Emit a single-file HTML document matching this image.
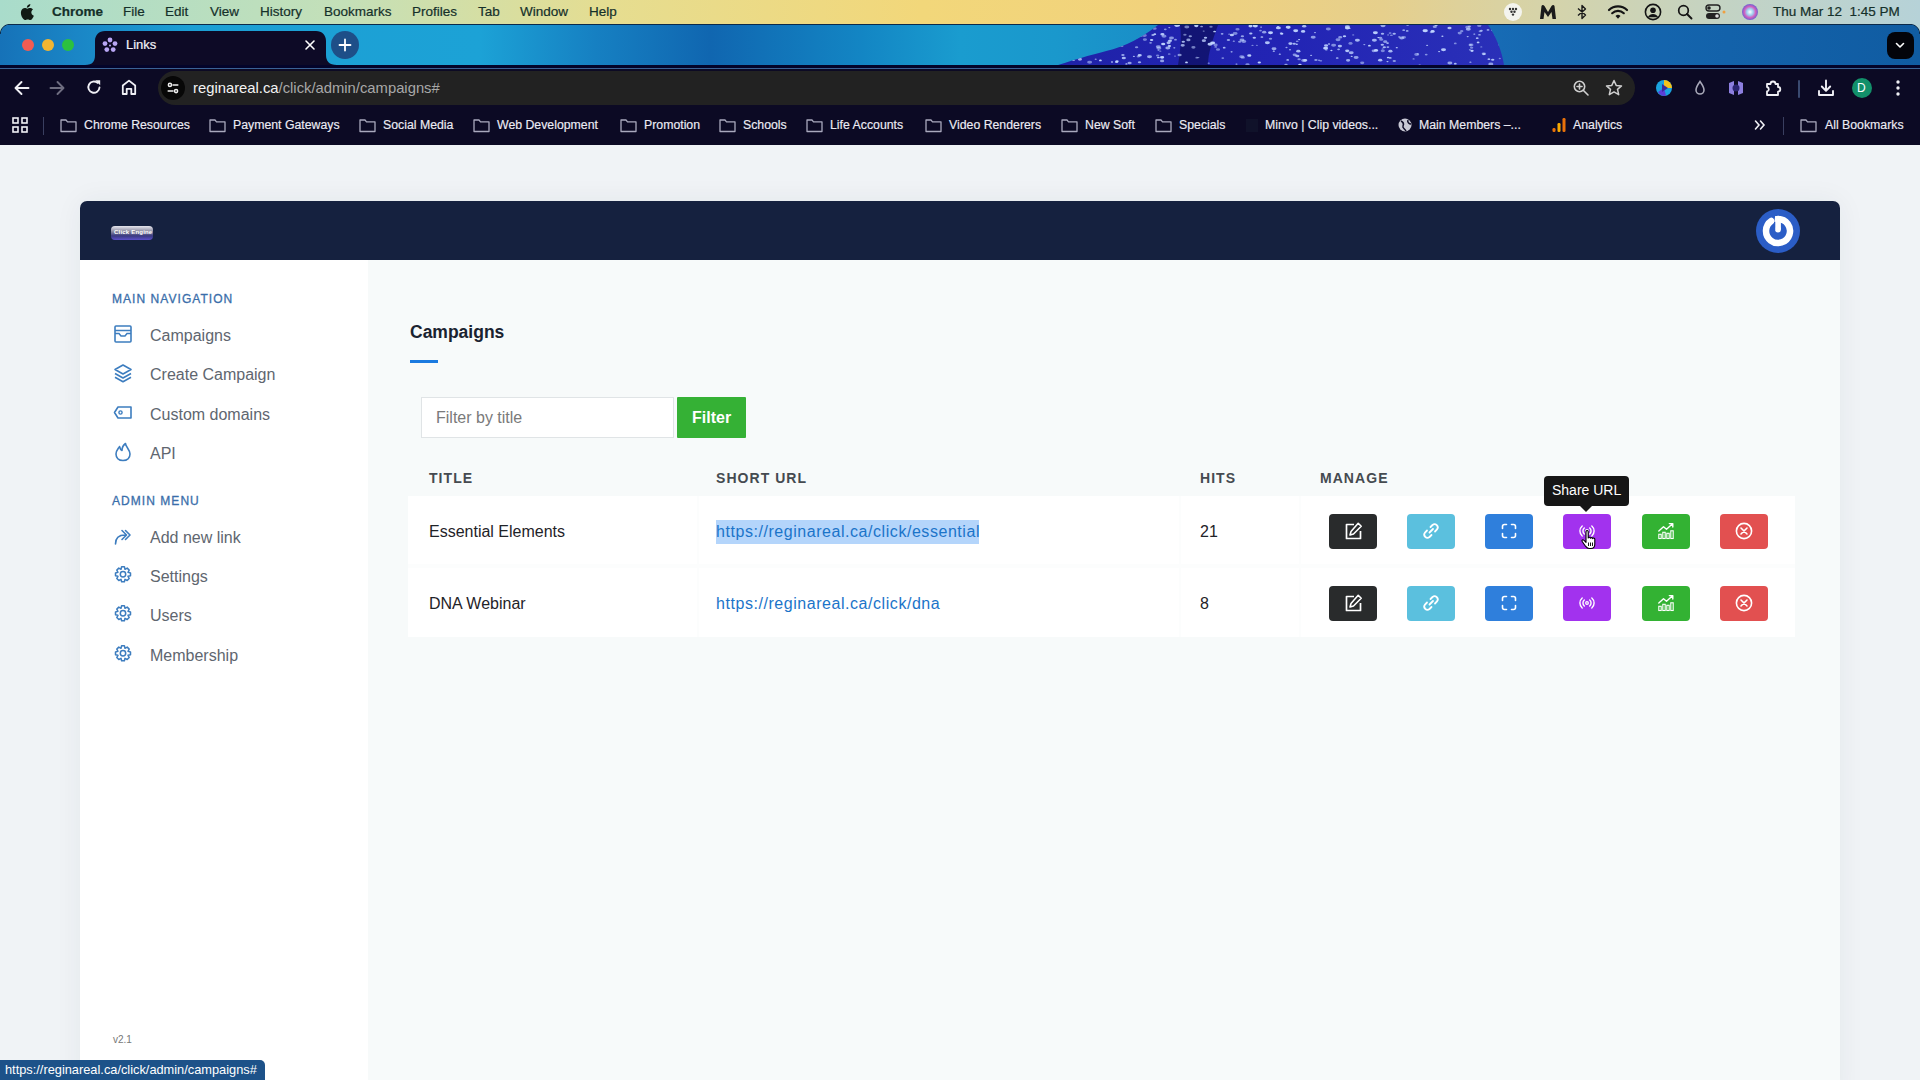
<!DOCTYPE html>
<html><head><meta charset="utf-8">
<style>
*{margin:0;padding:0;box-sizing:border-box}
html,body{width:1920px;height:1080px;overflow:hidden;font-family:"Liberation Sans",sans-serif;background:#f0f3f6;position:relative}
.a{position:absolute}
.t{position:absolute;white-space:nowrap;line-height:1}
/* menu bar */
#menubar{left:0;top:0;width:1920px;height:24px;background:linear-gradient(90deg,#a9dccb 0%,#c4e0b8 18%,#e6dd90 32%,#f2d77a 48%,#f1d27c 60%,#e6cf8c 72%,#d6d3a8 80%,#c3d3c4 90%,#b6d2d8 100%)}
#menubar .t{font-size:13.5px;color:#15302a;top:5px;-webkit-text-stroke:0.2px #15302a}
/* tab strip */
#tabs{left:0;top:24px;width:1920px;height:41px;background:linear-gradient(90deg,#1672b8 0%,#1a86c6 4%,#1c9fd4 10%,#1ca2d6 25%,#1680c2 31%,#1066b0 37%,#1386c4 45%,#1a9ccf 50%,#1a98cc 55%,#1870b8 75%,#1668b2 80%,#105ca2 100%)}
#toolbar{left:0;top:69px;width:1920px;height:76px;background:#0c0a24}
#page{left:0;top:145px;width:1920px;height:935px;background:#f0f3f6}
</style></head>
<body>
<div id="menubar" class="a">
  
  <svg class="a" style="left:19px;top:3px" width="15" height="18" viewBox="0 0 15 18"><path d="M12.3,9.6 C12.3,7.6 13.9,6.7 14,6.6 C13.1,5.3 11.7,5.1 11.2,5.1 C10,5 8.9,5.8 8.3,5.8 C7.7,5.8 6.8,5.1 5.8,5.1 C4.5,5.1 3.3,5.9 2.6,7.1 C1.2,9.5 2.2,13.1 3.6,15.1 C4.3,16.1 5.1,17.2 6.1,17.1 C7.1,17.1 7.5,16.5 8.7,16.5 C9.9,16.5 10.2,17.1 11.3,17.1 C12.4,17.1 13.1,16.1 13.7,15.1 C14.5,14 14.8,12.9 14.8,12.8 C14.8,12.8 12.3,11.9 12.3,9.6 Z M10.4,3.6 C11,2.9 11.4,1.9 11.3,0.9 C10.4,1 9.4,1.5 8.8,2.2 C8.2,2.9 7.8,3.8 7.9,4.8 C8.9,4.9 9.8,4.3 10.4,3.6 Z" fill="#121a14"/></svg>
  <div class="a" style="left:1504px;top:3px;width:18px;height:18px;border-radius:50%;background:#f4f4ee"></div>
  <svg class="a" style="left:1507px;top:6px" width="12" height="12" viewBox="0 0 12 12"><g fill="#333"><circle cx="3" cy="3" r="1.2"/><circle cx="6" cy="3" r="1.2"/><circle cx="9" cy="3" r="1.2"/><circle cx="4.5" cy="5.8" r="1.2"/><circle cx="7.5" cy="5.8" r="1.2"/><circle cx="6" cy="8.6" r="1.2"/></g></svg>
  <svg class="a" style="left:1539px;top:4px" width="18" height="16" viewBox="0 0 18 16"><path d="M1,15 L2.5,2 C3,0.5 4.5,0.5 5.5,2 L9,8 L12.5,2 C13.5,0.5 15,0.5 15.5,2 L17,15 L13.5,15 L12.5,8 L9,13 L5.5,8 L4.5,15 Z" fill="#1a1a1a"/></svg>
  <svg class="a" style="left:1576px;top:4px" width="12" height="16" viewBox="0 0 12 16"><path d="M2,4.5 L9.5,11 L6,14.5 V1.5 L9.5,5 L2,11.5" stroke="#1a1a1a" stroke-width="1.4" fill="none" stroke-linejoin="round"/></svg>
  <svg class="a" style="left:1607px;top:4px" width="22" height="16" viewBox="0 0 22 16"><g fill="none" stroke="#141414" stroke-width="2.2" stroke-linecap="round"><path d="M2,6 A13,13 0 0 1 20,6"/><path d="M5.2,9.2 A8.5,8.5 0 0 1 16.8,9.2"/></g><path d="M8.5,12 A3.7,3.7 0 0 1 13.5,12 L11,14.8 Z" fill="#141414"/></svg>
  <svg class="a" style="left:1644px;top:3px" width="18" height="18" viewBox="0 0 18 18"><circle cx="9" cy="9" r="7.6" stroke="#141414" stroke-width="1.6" fill="none"/><circle cx="9" cy="7.2" r="2.8" fill="#141414"/><path d="M3.8,14.2 C5,11.8 7,11 9,11 C11,11 13,11.8 14.2,14.2" fill="#141414"/></svg>
  <svg class="a" style="left:1677px;top:4px" width="16" height="16" viewBox="0 0 16 16"><circle cx="6.5" cy="6.5" r="4.8" stroke="#141414" stroke-width="1.7" fill="none"/><path d="M10,10 L14.5,14.5" stroke="#141414" stroke-width="1.9" stroke-linecap="round"/></svg>
  <svg class="a" style="left:1705px;top:4px" width="22" height="16" viewBox="0 0 22 16"><rect x="1" y="1" width="14" height="6" rx="3" fill="none" stroke="#222" stroke-width="1.4"/><circle cx="4" cy="4" r="1.8" fill="#222"/><rect x="1" y="9" width="14" height="6" rx="3" fill="#222"/><circle cx="12" cy="12" r="1.8" fill="#ddd"/><circle cx="19" cy="8" r="1.5" fill="#f0a040"/></svg>
  <svg class="a" style="left:1741px;top:3px" width="18" height="18" viewBox="0 0 18 18"><defs><radialGradient id="siri" cx="50%" cy="50%" r="50%"><stop offset="0%" stop-color="#fff"/><stop offset="40%" stop-color="#9fd0f0"/><stop offset="70%" stop-color="#d060c0"/><stop offset="100%" stop-color="#7060d0"/></radialGradient></defs><circle cx="9" cy="9" r="8" fill="url(#siri)"/></svg>
  <span class="t" style="left:52px;font-weight:bold">Chrome</span>
  <span class="t" style="left:123px">File</span>
  <span class="t" style="left:165px">Edit</span>
  <span class="t" style="left:210px">View</span>
  <span class="t" style="left:260px">History</span>
  <span class="t" style="left:324px">Bookmarks</span>
  <span class="t" style="left:412px">Profiles</span>
  <span class="t" style="left:478px">Tab</span>
  <span class="t" style="left:520px">Window</span>
  <span class="t" style="left:589px">Help</span>
  <span class="t" style="left:1773px">Thu Mar 12&nbsp;&nbsp;1:45 PM</span>
</div>
<div id="tabs" class="a">
  <div class="a" style="left:0;top:0;width:1920px;height:1px;background:#0b2a4a"></div>
  <div class="a" style="left:22px;top:15px;width:12px;height:12px;border-radius:50%;background:#f45c52"></div>
  <div class="a" style="left:42px;top:15px;width:12px;height:12px;border-radius:50%;background:#f2b533"></div>
  <div class="a" style="left:62px;top:15px;width:12px;height:12px;border-radius:50%;background:#2cc13f"></div>
  <!-- sparkle image region -->
  <svg class="a" style="left:1058px;top:1px" width="450" height="40" viewBox="0 0 450 43" preserveAspectRatio="none">
    <defs><clipPath id="spk"><path d="M0,43 C20,36 40,30 55,26 C75,20 90,8 100,0 L430,0 C438,12 444,28 446,43 Z"/></clipPath>
    <linearGradient id="spkg" x1="0" y1="0" x2="1" y2="0"><stop offset="0" stop-color="#1f22a8"/><stop offset="0.5" stop-color="#2224b4"/><stop offset="1" stop-color="#2a30b8"/></linearGradient></defs>
    <g clip-path="url(#spk)">
    <rect x="0" y="0" width="450" height="43" fill="url(#spkg)"/>
    <path d="M122,0 L160,0 C155,15 150,30 150,43 L120,43 C122,30 124,15 122,0 Z" fill="#0e1060" opacity="0.75"/>
    <g fill="#c0d4ff"><ellipse cx="145.7" cy="6.5" rx="1.1" ry="0.7" opacity="0.54"/><ellipse cx="241.1" cy="15.7" rx="1.1" ry="0.7" opacity="0.95"/><ellipse cx="96.6" cy="3.7" rx="2.1" ry="1.4" opacity="0.53"/><ellipse cx="40.8" cy="18.3" rx="2.5" ry="1.6" opacity="0.56"/><ellipse cx="100.5" cy="27.0" rx="1.1" ry="0.7" opacity="0.79"/><ellipse cx="178.5" cy="42.0" rx="1.1" ry="0.7" opacity="0.78"/><ellipse cx="59.9" cy="18.0" rx="2.5" ry="1.6" opacity="0.56"/><ellipse cx="138.8" cy="35.1" rx="1.4" ry="0.9" opacity="0.55"/><ellipse cx="257.0" cy="8.1" rx="1.1" ry="0.7" opacity="0.77"/><ellipse cx="28.3" cy="2.6" rx="1.4" ry="0.9" opacity="0.75"/><ellipse cx="239.3" cy="33.4" rx="2.1" ry="1.4" opacity="0.79"/><ellipse cx="203.9" cy="12.9" rx="1.4" ry="0.9" opacity="0.85"/><ellipse cx="109.8" cy="24.7" rx="2.5" ry="1.6" opacity="0.75"/><ellipse cx="154.6" cy="19.3" rx="2.5" ry="1.6" opacity="0.99"/><ellipse cx="53.1" cy="18.0" rx="1.7" ry="1.1" opacity="0.58"/><ellipse cx="220.0" cy="1.7" rx="1.1" ry="0.7" opacity="0.88"/><ellipse cx="257.9" cy="37.6" rx="1.7" ry="1.1" opacity="0.67"/><ellipse cx="157.6" cy="21.4" rx="2.1" ry="1.4" opacity="0.53"/><ellipse cx="42.1" cy="11.6" rx="1.1" ry="0.7" opacity="0.53"/><ellipse cx="315.7" cy="27.8" rx="2.1" ry="1.4" opacity="0.64"/><ellipse cx="173.6" cy="28.8" rx="1.1" ry="0.7" opacity="0.97"/><ellipse cx="160.0" cy="26.3" rx="2.1" ry="1.4" opacity="0.53"/><ellipse cx="345.7" cy="5.6" rx="1.4" ry="0.9" opacity="0.70"/><ellipse cx="412.6" cy="21.3" rx="1.4" ry="0.9" opacity="0.72"/><ellipse cx="247.2" cy="38.0" rx="2.1" ry="1.4" opacity="0.93"/><ellipse cx="125.3" cy="17.9" rx="1.7" ry="1.1" opacity="0.84"/><ellipse cx="171.2" cy="9.9" rx="1.1" ry="0.7" opacity="0.59"/><ellipse cx="104.4" cy="10.0" rx="2.1" ry="1.4" opacity="0.92"/><ellipse cx="82.1" cy="12.1" rx="1.4" ry="0.9" opacity="0.71"/><ellipse cx="166.2" cy="24.4" rx="1.4" ry="0.9" opacity="0.85"/><ellipse cx="232.0" cy="26.6" rx="1.1" ry="0.7" opacity="0.73"/><ellipse cx="391.9" cy="40.9" rx="2.5" ry="1.6" opacity="0.70"/><ellipse cx="179.5" cy="4.5" rx="2.1" ry="1.4" opacity="0.53"/><ellipse cx="30.3" cy="9.0" rx="1.4" ry="0.9" opacity="0.55"/><ellipse cx="270.3" cy="4.4" rx="2.5" ry="1.6" opacity="0.58"/><ellipse cx="45.7" cy="15.6" rx="1.1" ry="0.7" opacity="0.54"/><ellipse cx="93.6" cy="16.2" rx="1.7" ry="1.1" opacity="0.98"/><ellipse cx="271.0" cy="20.4" rx="1.1" ry="0.7" opacity="0.92"/><ellipse cx="446.9" cy="20.0" rx="2.1" ry="1.4" opacity="0.66"/><ellipse cx="64.9" cy="32.2" rx="1.7" ry="1.1" opacity="0.74"/><ellipse cx="311.4" cy="22.2" rx="1.4" ry="0.9" opacity="0.98"/><ellipse cx="237.7" cy="6.3" rx="2.5" ry="1.6" opacity="0.96"/><ellipse cx="341.2" cy="12.8" rx="1.1" ry="0.7" opacity="0.85"/><ellipse cx="117.5" cy="15.8" rx="1.4" ry="0.9" opacity="0.68"/><ellipse cx="100.3" cy="23.3" rx="2.5" ry="1.6" opacity="0.66"/><ellipse cx="100.4" cy="34.9" rx="1.4" ry="0.9" opacity="0.90"/><ellipse cx="368.2" cy="31.8" rx="1.4" ry="0.9" opacity="0.60"/><ellipse cx="221.8" cy="31.4" rx="1.1" ry="0.7" opacity="0.90"/><ellipse cx="212.5" cy="8.3" rx="2.5" ry="1.6" opacity="0.98"/><ellipse cx="201.3" cy="40.3" rx="1.7" ry="1.1" opacity="0.98"/><ellipse cx="164.1" cy="9.5" rx="1.4" ry="0.9" opacity="0.74"/><ellipse cx="152.0" cy="20.8" rx="2.5" ry="1.6" opacity="0.92"/><ellipse cx="215.8" cy="28.1" rx="1.1" ry="0.7" opacity="0.92"/><ellipse cx="54.0" cy="16.7" rx="1.4" ry="0.9" opacity="0.74"/><ellipse cx="80.3" cy="33.9" rx="1.7" ry="1.1" opacity="0.54"/><ellipse cx="425.8" cy="31.0" rx="2.1" ry="1.4" opacity="0.70"/><ellipse cx="426.1" cy="31.2" rx="1.4" ry="0.9" opacity="1.00"/><ellipse cx="12.4" cy="25.4" rx="2.1" ry="1.4" opacity="0.90"/><ellipse cx="65.8" cy="35.5" rx="2.1" ry="1.4" opacity="0.83"/><ellipse cx="157.7" cy="23.6" rx="1.4" ry="0.9" opacity="0.51"/><ellipse cx="359.7" cy="31.2" rx="1.1" ry="0.7" opacity="0.76"/><ellipse cx="420.1" cy="18.7" rx="1.4" ry="0.9" opacity="0.91"/><ellipse cx="95.0" cy="10.8" rx="1.7" ry="1.1" opacity="0.75"/><ellipse cx="343.7" cy="14.0" rx="2.5" ry="1.6" opacity="0.71"/><ellipse cx="59.0" cy="39.1" rx="1.7" ry="1.1" opacity="0.95"/><ellipse cx="298.1" cy="35.0" rx="2.5" ry="1.6" opacity="0.71"/><ellipse cx="413.0" cy="21.6" rx="2.5" ry="1.6" opacity="0.58"/><ellipse cx="229.7" cy="37.5" rx="1.4" ry="0.9" opacity="0.80"/><ellipse cx="349.2" cy="6.4" rx="1.4" ry="0.9" opacity="0.74"/><ellipse cx="326.3" cy="23.9" rx="1.7" ry="1.1" opacity="0.84"/><ellipse cx="238.8" cy="20.7" rx="1.1" ry="0.7" opacity="0.94"/><ellipse cx="25.6" cy="8.2" rx="1.1" ry="0.7" opacity="0.89"/><ellipse cx="228.5" cy="24.2" rx="1.1" ry="0.7" opacity="0.72"/><ellipse cx="275.6" cy="21.7" rx="2.5" ry="1.6" opacity="0.60"/><ellipse cx="124.7" cy="21.9" rx="2.1" ry="1.4" opacity="0.75"/><ellipse cx="111.4" cy="22.5" rx="1.7" ry="1.1" opacity="0.96"/><ellipse cx="401.7" cy="8.7" rx="2.1" ry="1.4" opacity="0.57"/><ellipse cx="54.7" cy="19.0" rx="1.1" ry="0.7" opacity="0.84"/><ellipse cx="192.8" cy="9.1" rx="1.7" ry="1.1" opacity="0.89"/><ellipse cx="403.7" cy="6.6" rx="1.7" ry="1.1" opacity="0.57"/><ellipse cx="397.3" cy="41.6" rx="1.4" ry="0.9" opacity="0.87"/><ellipse cx="42.4" cy="38.1" rx="1.4" ry="0.9" opacity="0.99"/><ellipse cx="374.6" cy="6.9" rx="2.1" ry="1.4" opacity="1.00"/><ellipse cx="181.7" cy="18.1" rx="1.7" ry="1.1" opacity="0.66"/><ellipse cx="325.0" cy="0.8" rx="2.5" ry="1.6" opacity="0.73"/><ellipse cx="316.4" cy="16.5" rx="2.5" ry="1.6" opacity="0.81"/><ellipse cx="230.5" cy="2.8" rx="1.4" ry="0.9" opacity="0.99"/><ellipse cx="47.2" cy="11.4" rx="1.1" ry="0.7" opacity="0.95"/><ellipse cx="81.7" cy="32.5" rx="2.1" ry="1.4" opacity="0.92"/><ellipse cx="304.2" cy="40.7" rx="2.1" ry="1.4" opacity="0.57"/><ellipse cx="413.6" cy="24.5" rx="1.7" ry="1.1" opacity="0.54"/><ellipse cx="25.9" cy="29.6" rx="2.1" ry="1.4" opacity="0.95"/><ellipse cx="121.0" cy="0.7" rx="1.1" ry="0.7" opacity="0.90"/><ellipse cx="37.7" cy="36.8" rx="1.1" ry="0.7" opacity="0.63"/><ellipse cx="54.8" cy="0.5" rx="2.5" ry="1.6" opacity="0.71"/><ellipse cx="411.9" cy="26.7" rx="1.1" ry="0.7" opacity="0.76"/><ellipse cx="107.3" cy="4.7" rx="1.4" ry="0.9" opacity="0.63"/><ellipse cx="81.5" cy="40.1" rx="1.7" ry="1.1" opacity="0.77"/><ellipse cx="92.6" cy="19.2" rx="1.4" ry="0.9" opacity="0.64"/><ellipse cx="361.7" cy="42.8" rx="1.1" ry="0.7" opacity="0.51"/><ellipse cx="329.9" cy="23.7" rx="1.4" ry="0.9" opacity="0.76"/><ellipse cx="110.6" cy="19.2" rx="2.1" ry="1.4" opacity="0.83"/><ellipse cx="245.7" cy="38.2" rx="2.5" ry="1.6" opacity="0.65"/><ellipse cx="96.8" cy="9.9" rx="1.4" ry="0.9" opacity="0.92"/><ellipse cx="318.0" cy="27.3" rx="2.1" ry="1.4" opacity="0.99"/><ellipse cx="441.8" cy="36.0" rx="1.1" ry="0.7" opacity="0.54"/><ellipse cx="333.4" cy="11.0" rx="1.4" ry="0.9" opacity="0.53"/><ellipse cx="299.4" cy="16.4" rx="2.5" ry="1.6" opacity="0.84"/><ellipse cx="126.9" cy="10.4" rx="1.7" ry="1.1" opacity="0.52"/><ellipse cx="83.4" cy="11.6" rx="1.1" ry="0.7" opacity="0.63"/><ellipse cx="432.8" cy="41.8" rx="2.5" ry="1.6" opacity="0.66"/><ellipse cx="15.5" cy="37.9" rx="1.4" ry="0.9" opacity="0.68"/><ellipse cx="0.5" cy="16.4" rx="2.1" ry="1.4" opacity="0.64"/><ellipse cx="295.2" cy="10.7" rx="1.1" ry="0.7" opacity="0.55"/><ellipse cx="367.7" cy="6.2" rx="2.5" ry="1.6" opacity="0.52"/><ellipse cx="10.1" cy="13.1" rx="1.4" ry="0.9" opacity="0.54"/><ellipse cx="430.9" cy="36.7" rx="1.4" ry="0.9" opacity="0.83"/><ellipse cx="322.2" cy="37.8" rx="2.1" ry="1.4" opacity="0.88"/><ellipse cx="324.3" cy="21.3" rx="1.7" ry="1.1" opacity="0.86"/><ellipse cx="289.4" cy="1.9" rx="2.5" ry="1.6" opacity="0.81"/><ellipse cx="330.2" cy="34.9" rx="1.4" ry="0.9" opacity="0.95"/><ellipse cx="338.8" cy="24.4" rx="1.1" ry="0.7" opacity="0.91"/><ellipse cx="262.8" cy="38.4" rx="1.4" ry="0.9" opacity="0.54"/><ellipse cx="18.8" cy="27.4" rx="1.1" ry="0.7" opacity="0.69"/><ellipse cx="203.1" cy="2.2" rx="1.1" ry="0.7" opacity="0.81"/><ellipse cx="306.3" cy="21.0" rx="1.1" ry="0.7" opacity="0.73"/><ellipse cx="31.6" cy="40.1" rx="2.5" ry="1.6" opacity="0.55"/><ellipse cx="236.7" cy="32.1" rx="2.1" ry="1.4" opacity="0.63"/><ellipse cx="33.5" cy="11.4" rx="1.4" ry="0.9" opacity="0.62"/><ellipse cx="292.5" cy="19.8" rx="2.1" ry="1.4" opacity="0.54"/><ellipse cx="409.7" cy="12.4" rx="1.1" ry="0.7" opacity="0.81"/><ellipse cx="289.2" cy="3.3" rx="1.4" ry="0.9" opacity="0.67"/><ellipse cx="293.2" cy="29.8" rx="2.5" ry="1.6" opacity="0.78"/><ellipse cx="5.6" cy="2.6" rx="1.7" ry="1.1" opacity="0.99"/><ellipse cx="44.8" cy="9.4" rx="2.1" ry="1.4" opacity="0.65"/><ellipse cx="232.4" cy="20.0" rx="2.1" ry="1.4" opacity="0.88"/><ellipse cx="447.0" cy="23.6" rx="1.7" ry="1.1" opacity="0.99"/><ellipse cx="421.3" cy="0.8" rx="2.1" ry="1.4" opacity="0.54"/><ellipse cx="228.0" cy="42.8" rx="1.7" ry="1.1" opacity="0.69"/><ellipse cx="412.4" cy="40.0" rx="1.1" ry="0.7" opacity="0.79"/><ellipse cx="63.8" cy="22.5" rx="1.7" ry="1.1" opacity="0.57"/><ellipse cx="369.1" cy="21.9" rx="1.1" ry="0.7" opacity="0.85"/><ellipse cx="104.1" cy="38.6" rx="2.1" ry="1.4" opacity="0.70"/><ellipse cx="71.6" cy="40.8" rx="2.1" ry="1.4" opacity="0.70"/><ellipse cx="327.2" cy="17.9" rx="2.1" ry="1.4" opacity="0.66"/><ellipse cx="378.1" cy="0.1" rx="1.7" ry="1.1" opacity="0.92"/><ellipse cx="54.0" cy="39.8" rx="1.1" ry="0.7" opacity="0.95"/><ellipse cx="130.4" cy="16.0" rx="2.1" ry="1.4" opacity="0.70"/><ellipse cx="391.5" cy="3.3" rx="2.1" ry="1.4" opacity="0.88"/><ellipse cx="384.4" cy="12.1" rx="1.1" ry="0.7" opacity="0.92"/><ellipse cx="128.5" cy="40.2" rx="1.4" ry="0.9" opacity="0.99"/><ellipse cx="196.3" cy="13.6" rx="1.7" ry="1.1" opacity="0.89"/><ellipse cx="192.5" cy="1.2" rx="2.1" ry="1.4" opacity="0.96"/><ellipse cx="423.3" cy="23.6" rx="1.1" ry="0.7" opacity="0.52"/><ellipse cx="329.6" cy="19.4" rx="1.4" ry="0.9" opacity="0.82"/><ellipse cx="128.8" cy="2.1" rx="2.5" ry="1.6" opacity="0.56"/><ellipse cx="212.5" cy="14.8" rx="1.7" ry="1.1" opacity="0.63"/><ellipse cx="332.4" cy="28.1" rx="2.1" ry="1.4" opacity="0.83"/><ellipse cx="135.4" cy="24.0" rx="2.1" ry="1.4" opacity="0.56"/><ellipse cx="289.4" cy="3.2" rx="2.5" ry="1.6" opacity="0.95"/><ellipse cx="223.7" cy="9.5" rx="1.7" ry="1.1" opacity="1.00"/><ellipse cx="202.5" cy="6.0" rx="1.4" ry="0.9" opacity="0.62"/><ellipse cx="78.6" cy="23.9" rx="1.7" ry="1.1" opacity="0.62"/><ellipse cx="116.3" cy="24.5" rx="1.1" ry="0.7" opacity="0.87"/><ellipse cx="185.8" cy="17.8" rx="2.5" ry="1.6" opacity="0.61"/><ellipse cx="121.6" cy="32.3" rx="2.1" ry="1.4" opacity="0.64"/><ellipse cx="435.5" cy="5.4" rx="2.5" ry="1.6" opacity="0.76"/><ellipse cx="355.6" cy="36.5" rx="1.1" ry="0.7" opacity="0.64"/><ellipse cx="111.8" cy="17.2" rx="2.1" ry="1.4" opacity="0.72"/><ellipse cx="140.4" cy="35.0" rx="1.1" ry="0.7" opacity="0.56"/><ellipse cx="191.3" cy="32.8" rx="2.1" ry="1.4" opacity="0.98"/><ellipse cx="220.4" cy="3.1" rx="2.5" ry="1.6" opacity="0.93"/><ellipse cx="437.5" cy="10.7" rx="1.1" ry="0.7" opacity="0.61"/><ellipse cx="68.4" cy="41.8" rx="1.1" ry="0.7" opacity="0.97"/><ellipse cx="324.8" cy="27.8" rx="2.1" ry="1.4" opacity="0.54"/><ellipse cx="349.6" cy="0.1" rx="1.4" ry="0.9" opacity="0.62"/><ellipse cx="414.0" cy="27.8" rx="1.7" ry="1.1" opacity="0.98"/><ellipse cx="281.9" cy="22.7" rx="2.1" ry="1.4" opacity="0.85"/><ellipse cx="50.5" cy="3.0" rx="2.5" ry="1.6" opacity="0.97"/><ellipse cx="86.3" cy="11.2" rx="2.5" ry="1.6" opacity="0.50"/><ellipse cx="241.9" cy="42.8" rx="1.7" ry="1.1" opacity="0.98"/><ellipse cx="290.1" cy="38.0" rx="2.1" ry="1.4" opacity="0.76"/><ellipse cx="246.2" cy="1.3" rx="2.1" ry="1.4" opacity="0.85"/><ellipse cx="138.3" cy="0.9" rx="2.1" ry="1.4" opacity="0.94"/><ellipse cx="291.2" cy="3.5" rx="1.4" ry="0.9" opacity="0.83"/><ellipse cx="416.3" cy="9.8" rx="1.1" ry="0.7" opacity="0.85"/><ellipse cx="323.2" cy="15.6" rx="2.1" ry="1.4" opacity="0.60"/><ellipse cx="358.7" cy="31.8" rx="2.5" ry="1.6" opacity="0.53"/><ellipse cx="223.1" cy="8.6" rx="1.4" ry="0.9" opacity="0.62"/><ellipse cx="99.6" cy="32.7" rx="1.7" ry="1.1" opacity="0.55"/><ellipse cx="280.6" cy="26.2" rx="1.4" ry="0.9" opacity="0.74"/><ellipse cx="409.7" cy="2.4" rx="2.5" ry="1.6" opacity="0.57"/><ellipse cx="177.1" cy="9.2" rx="2.5" ry="1.6" opacity="0.57"/><ellipse cx="23.3" cy="2.6" rx="2.1" ry="1.4" opacity="0.72"/><ellipse cx="320.4" cy="13.5" rx="1.1" ry="0.7" opacity="1.00"/><ellipse cx="419.2" cy="14.2" rx="1.4" ry="0.9" opacity="0.83"/><ellipse cx="236.2" cy="20.1" rx="1.7" ry="1.1" opacity="0.83"/><ellipse cx="170.4" cy="16.1" rx="1.7" ry="1.1" opacity="0.72"/><ellipse cx="49.0" cy="3.4" rx="1.1" ry="0.7" opacity="0.68"/><ellipse cx="430.0" cy="5.3" rx="1.4" ry="0.9" opacity="0.69"/><ellipse cx="345.9" cy="13.3" rx="2.1" ry="1.4" opacity="0.54"/><ellipse cx="317.4" cy="8.4" rx="2.5" ry="1.6" opacity="0.96"/><ellipse cx="86.9" cy="15.7" rx="2.1" ry="1.4" opacity="0.52"/><ellipse cx="184.9" cy="34.9" rx="2.1" ry="1.4" opacity="0.52"/><ellipse cx="15.7" cy="2.7" rx="1.1" ry="0.7" opacity="0.63"/><ellipse cx="336.3" cy="38.6" rx="1.7" ry="1.1" opacity="0.68"/><ellipse cx="150.7" cy="41.0" rx="1.1" ry="0.7" opacity="0.63"/><ellipse cx="322.5" cy="13.6" rx="1.7" ry="1.1" opacity="0.65"/><ellipse cx="324.7" cy="25.6" rx="1.1" ry="0.7" opacity="0.51"/><ellipse cx="105.2" cy="20.4" rx="2.1" ry="1.4" opacity="0.98"/><ellipse cx="173.9" cy="10.8" rx="2.1" ry="1.4" opacity="0.91"/><ellipse cx="59.7" cy="21.4" rx="1.1" ry="0.7" opacity="0.90"/><ellipse cx="332.3" cy="35.4" rx="1.4" ry="0.9" opacity="0.80"/><ellipse cx="147.5" cy="13.7" rx="1.7" ry="1.1" opacity="0.89"/><ellipse cx="268.1" cy="22.0" rx="2.1" ry="1.4" opacity="0.88"/><ellipse cx="111.3" cy="2.8" rx="1.1" ry="0.7" opacity="0.74"/><ellipse cx="245.1" cy="6.9" rx="2.1" ry="1.4" opacity="0.94"/><ellipse cx="444.5" cy="11.4" rx="1.1" ry="0.7" opacity="0.60"/><ellipse cx="189.5" cy="42.5" rx="2.1" ry="1.4" opacity="0.59"/><ellipse cx="59.8" cy="19.8" rx="1.4" ry="0.9" opacity="0.87"/><ellipse cx="381.1" cy="28.6" rx="1.1" ry="0.7" opacity="0.89"/><ellipse cx="132.3" cy="12.0" rx="1.7" ry="1.1" opacity="0.69"/><ellipse cx="332.1" cy="8.6" rx="1.4" ry="0.9" opacity="0.59"/><ellipse cx="106.0" cy="12.1" rx="2.5" ry="1.6" opacity="0.59"/><ellipse cx="29.2" cy="10.8" rx="1.4" ry="0.9" opacity="0.75"/><ellipse cx="104.1" cy="34.8" rx="2.1" ry="1.4" opacity="1.00"/><ellipse cx="46.0" cy="20.4" rx="1.4" ry="0.9" opacity="0.92"/><ellipse cx="411.5" cy="1.7" rx="1.7" ry="1.1" opacity="0.62"/><ellipse cx="22.7" cy="25.8" rx="2.5" ry="1.6" opacity="0.60"/><ellipse cx="33.8" cy="22.0" rx="1.4" ry="0.9" opacity="0.72"/><ellipse cx="117.0" cy="33.4" rx="1.1" ry="0.7" opacity="0.55"/><ellipse cx="268.3" cy="26.7" rx="1.4" ry="0.9" opacity="0.52"/><ellipse cx="153.0" cy="1.9" rx="1.7" ry="1.1" opacity="0.52"/><ellipse cx="329.5" cy="39.3" rx="1.1" ry="0.7" opacity="0.91"/><ellipse cx="184.0" cy="16.0" rx="2.5" ry="1.6" opacity="0.66"/><ellipse cx="91.5" cy="34.2" rx="2.5" ry="1.6" opacity="0.74"/><ellipse cx="183.7" cy="34.2" rx="2.5" ry="1.6" opacity="0.58"/><ellipse cx="240.3" cy="28.1" rx="2.1" ry="1.4" opacity="0.85"/><ellipse cx="184.4" cy="12.2" rx="1.7" ry="1.1" opacity="0.71"/><ellipse cx="23.1" cy="32.0" rx="1.7" ry="1.1" opacity="0.71"/><ellipse cx="8.2" cy="33.0" rx="1.7" ry="1.1" opacity="0.82"/><ellipse cx="175.8" cy="17.4" rx="1.1" ry="0.7" opacity="0.72"/><ellipse cx="70.5" cy="4.9" rx="1.1" ry="0.7" opacity="0.70"/><ellipse cx="397.3" cy="19.8" rx="1.4" ry="0.9" opacity="0.56"/><ellipse cx="23.3" cy="6.1" rx="2.1" ry="1.4" opacity="0.54"/><ellipse cx="280.0" cy="15.9" rx="2.5" ry="1.6" opacity="0.59"/><ellipse cx="156.6" cy="7.0" rx="1.4" ry="0.9" opacity="0.96"/><ellipse cx="49.0" cy="21.1" rx="1.4" ry="0.9" opacity="0.65"/><ellipse cx="376.8" cy="1.9" rx="2.1" ry="1.4" opacity="0.66"/><ellipse cx="273.4" cy="27.4" rx="1.1" ry="0.7" opacity="0.95"/><ellipse cx="279.2" cy="35.5" rx="1.4" ry="0.9" opacity="0.82"/><ellipse cx="385.5" cy="26.7" rx="2.5" ry="1.6" opacity="0.92"/><ellipse cx="373.1" cy="7.9" rx="1.4" ry="0.9" opacity="0.52"/><ellipse cx="422.3" cy="6.7" rx="1.7" ry="1.1" opacity="0.56"/><ellipse cx="111.2" cy="31.2" rx="1.4" ry="0.9" opacity="0.52"/><ellipse cx="253.1" cy="32.6" rx="1.1" ry="0.7" opacity="0.83"/><ellipse cx="145.9" cy="16.8" rx="2.1" ry="1.4" opacity="0.78"/><ellipse cx="282.2" cy="13.2" rx="2.1" ry="1.4" opacity="0.65"/><ellipse cx="112.2" cy="16.7" rx="1.7" ry="1.1" opacity="0.72"/><ellipse cx="197.3" cy="1.0" rx="2.5" ry="1.6" opacity="0.99"/><ellipse cx="209.4" cy="19.2" rx="2.5" ry="1.6" opacity="0.89"/><ellipse cx="206.2" cy="7.7" rx="2.1" ry="1.4" opacity="0.70"/><ellipse cx="30.2" cy="15.4" rx="1.7" ry="1.1" opacity="0.55"/><ellipse cx="198.9" cy="21.9" rx="1.1" ry="0.7" opacity="0.52"/><ellipse cx="58.6" cy="39.7" rx="1.7" ry="1.1" opacity="0.89"/><ellipse cx="230.2" cy="2.3" rx="2.5" ry="1.6" opacity="0.95"/><ellipse cx="293.7" cy="33.7" rx="1.1" ry="0.7" opacity="0.93"/><ellipse cx="448.3" cy="31.5" rx="1.1" ry="0.7" opacity="0.60"/><ellipse cx="441.8" cy="21.2" rx="1.4" ry="0.9" opacity="0.84"/><ellipse cx="324.5" cy="9.5" rx="1.7" ry="1.1" opacity="0.81"/><ellipse cx="113.5" cy="13.9" rx="2.5" ry="1.6" opacity="0.64"/><ellipse cx="367.0" cy="6.2" rx="2.5" ry="1.6" opacity="0.98"/><ellipse cx="216.0" cy="25.5" rx="2.5" ry="1.6" opacity="0.75"/><ellipse cx="143.6" cy="1.6" rx="1.4" ry="0.9" opacity="0.70"/><ellipse cx="286.5" cy="12.0" rx="1.7" ry="1.1" opacity="0.95"/><ellipse cx="75.9" cy="33.7" rx="1.1" ry="0.7" opacity="0.88"/><ellipse cx="21.9" cy="36.9" rx="2.1" ry="1.4" opacity="0.78"/><ellipse cx="261.0" cy="37.9" rx="1.1" ry="0.7" opacity="0.63"/><ellipse cx="241.1" cy="36.8" rx="1.7" ry="1.1" opacity="0.63"/><ellipse cx="445.7" cy="24.8" rx="1.7" ry="1.1" opacity="0.67"/><ellipse cx="36.6" cy="9.9" rx="2.5" ry="1.6" opacity="0.87"/><ellipse cx="21.7" cy="35.3" rx="1.7" ry="1.1" opacity="0.66"/><ellipse cx="434.7" cy="37.4" rx="1.7" ry="1.1" opacity="0.87"/><ellipse cx="336.2" cy="9.5" rx="1.7" ry="1.1" opacity="0.81"/><ellipse cx="194.5" cy="22.0" rx="1.1" ry="0.7" opacity="0.57"/><ellipse cx="102.3" cy="28.1" rx="1.1" ry="0.7" opacity="0.53"/><ellipse cx="255.2" cy="13.1" rx="2.5" ry="1.6" opacity="0.68"/><ellipse cx="100.9" cy="25.1" rx="2.5" ry="1.6" opacity="0.57"/><ellipse cx="164.8" cy="35.6" rx="1.4" ry="0.9" opacity="0.57"/><ellipse cx="421.5" cy="10.5" rx="1.4" ry="0.9" opacity="0.73"/><ellipse cx="28.7" cy="6.2" rx="1.7" ry="1.1" opacity="0.70"/><ellipse cx="118.9" cy="0.5" rx="2.5" ry="1.6" opacity="0.95"/><ellipse cx="267.6" cy="24.9" rx="2.5" ry="1.6" opacity="0.97"/><ellipse cx="330.1" cy="10.7" rx="1.1" ry="0.7" opacity="0.52"/><ellipse cx="239.2" cy="17.5" rx="1.4" ry="0.9" opacity="0.58"/><ellipse cx="410.3" cy="4.5" rx="2.5" ry="1.6" opacity="0.78"/><ellipse cx="423.4" cy="6.1" rx="1.4" ry="0.9" opacity="0.76"/><ellipse cx="289.2" cy="27.8" rx="2.1" ry="1.4" opacity="0.91"/><ellipse cx="78.6" cy="13.3" rx="1.7" ry="1.1" opacity="0.81"/><ellipse cx="447.3" cy="31.1" rx="2.1" ry="1.4" opacity="0.86"/></g>
    </g>
  </svg>
  <!-- active tab -->
  <svg class="a" style="left:85px;top:7px" width="252" height="34" viewBox="0 0 252 34">
    <path d="M0,34 C8,34 10,30 10,24 L10,10 C10,4 14,0 20,0 L231,0 C237,0 241,4 241,10 L241,24 C241,30 244,34 252,34 Z" fill="#0d0a26"/>
  </svg>
  <svg class="a" style="left:102px;top:13px" width="16" height="16" viewBox="0 0 16 16">
    <g fill="#b9a6f5"><circle cx="8" cy="3" r="2.4"/><circle cx="13" cy="6.6" r="2.4"/><circle cx="11.2" cy="12.6" r="2.4"/><circle cx="4.8" cy="12.6" r="2.4"/><circle cx="3" cy="6.6" r="2.4"/></g>
    <circle cx="8" cy="8.5" r="2.2" fill="#0d0a26"/><circle cx="8" cy="8.5" r="1" fill="#b9a6f5"/>
  </svg>
  <span class="t" style="left:126px;top:14px;font-size:13px;color:#f2f2f8;-webkit-text-stroke:0.2px #f2f2f8">Links</span>
  <svg class="a" style="left:304px;top:15px" width="12" height="12" viewBox="0 0 12 12"><path d="M2,2 L10,10 M10,2 L2,10" stroke="#fff" stroke-width="1.6" stroke-linecap="round"/></svg>
  <div class="a" style="left:331px;top:7px;width:28px;height:28px;border-radius:50%;background:#1e4f88"></div>
  <svg class="a" style="left:338px;top:14px" width="14" height="14" viewBox="0 0 14 14"><path d="M7,1.5 V12.5 M1.5,7 H12.5" stroke="#fff" stroke-width="1.8" stroke-linecap="round"/></svg>
  <div class="a" style="left:1887px;top:8px;width:27px;height:27px;border-radius:8px;background:#03040a"></div>
  <svg class="a" style="left:1894px;top:15px" width="12" height="12" viewBox="0 0 12 12"><path d="M2.5,4.5 L6,8 L9.5,4.5" stroke="#fff" stroke-width="1.6" fill="none" stroke-linecap="round" stroke-linejoin="round"/></svg>
  <div class="a" style="left:0;top:41px;width:1920px;height:3px;background:#03042a"></div>
  <div class="a" style="left:0;top:44px;width:1920px;height:1.5px;background:#3a6294"></div>
</div>
<div class="a" style="left:0;top:24px;width:10px;height:10px;background:radial-gradient(circle at 10px 10px,rgba(0,0,0,0) 9px,#0b2a4a 9.6px,#a9dccb 10.6px)"></div>
<div class="a" style="left:1910px;top:24px;width:10px;height:10px;background:radial-gradient(circle at 0px 10px,rgba(0,0,0,0) 9px,#0b2a4a 9.6px,#b6d2d8 10.6px)"></div>
<div id="toolbar" class="a">
  <svg class="a" style="left:12px;top:9px" width="20" height="20" viewBox="0 0 20 20"><path d="M16.5,10 H4 M9.5,4 L3.5,10 L9.5,16" stroke="#f0f0f5" stroke-width="1.9" fill="none" stroke-linecap="round" stroke-linejoin="round"/></svg>
  <svg class="a" style="left:47px;top:9px" width="20" height="20" viewBox="0 0 20 20"><path d="M3.5,10 H16 M10.5,4 L16.5,10 L10.5,16" stroke="#6e6d80" stroke-width="1.9" fill="none" stroke-linecap="round" stroke-linejoin="round"/></svg>
  <svg class="a" style="left:84px;top:8px" width="20" height="20" viewBox="0 0 20 20"><path d="M15.5,10.5 A5.6,5.6 0 1 1 13.6,5.9" stroke="#f0f0f5" stroke-width="1.9" fill="none" stroke-linecap="round"/><path d="M11.2,3.2 L16.2,3.2 L16.2,8.2 Z" fill="#f0f0f5"/></svg>
  <svg class="a" style="left:119px;top:8px" width="20" height="20" viewBox="0 0 20 20"><path d="M3.8,17 V8.5 L10,3.6 L16.2,8.5 V17 H12.3 V11.8 H7.7 V17 Z" stroke="#f0f0f5" stroke-width="1.8" fill="none" stroke-linejoin="round"/></svg>
  <div class="a" style="left:158px;top:2px;width:1477px;height:34px;border-radius:17px;background:#222222"></div>
  <div class="a" style="left:161px;top:7px;width:24px;height:24px;border-radius:50%;background:#070707"></div>
  <svg class="a" style="left:166px;top:12px" width="14" height="14" viewBox="0 0 16 16"><g stroke="#f0f0f0" stroke-width="1.7" fill="none" stroke-linecap="round"><circle cx="4.5" cy="4.5" r="1.8"/><path d="M8,4.5 H13.5"/><circle cx="11.5" cy="11.5" r="1.8"/><path d="M2.5,11.5 H8"/></g></svg>
  <span class="t" style="left:193px;top:12px;font-size:14.8px;color:#f3f3f3">reginareal.ca<span style="color:#a8a8a8">/click/admin/campaigns#</span></span>
  <svg class="a" style="left:1571px;top:9px" width="20" height="20" viewBox="0 0 20 20"><circle cx="8.5" cy="8.5" r="5.2" stroke="#cfcfcf" stroke-width="1.6" fill="none"/><path d="M12.5,12.5 L17,17 M6,8.5 H11 M8.5,6 V11" stroke="#cfcfcf" stroke-width="1.6" stroke-linecap="round"/></svg>
  <svg class="a" style="left:1604px;top:9px" width="20" height="20" viewBox="0 0 20 20"><path d="M10,2.5 L12.2,7.4 L17.5,7.9 L13.5,11.4 L14.7,16.7 L10,13.9 L5.3,16.7 L6.5,11.4 L2.5,7.9 L7.8,7.4 Z" stroke="#cfcfcf" stroke-width="1.5" fill="none" stroke-linejoin="round"/></svg>
  <!-- extensions -->
  <svg class="a" style="left:1654px;top:9px" width="20" height="20" viewBox="0 0 20 20"><circle cx="10" cy="10" r="8" fill="#1aa3e0"/><path d="M10,2 A8,8 0 0 1 18,10 L10,10 Z" fill="#f5c21b"/><path d="M4,14 A8,8 0 0 0 12,17.8 L10,10 Z" fill="#5b3fd6"/><path d="M8,6 L14,10 L8,14 Z" fill="#3b2a9a"/></svg>
  <svg class="a" style="left:1690px;top:9px" width="20" height="20" viewBox="0 0 20 20"><path d="M10,3.5 C12.5,7 14,9.5 14,12 A4,4 0 0 1 6,12 C6,9.5 7.5,7 10,3.5 Z" stroke="#a8a8b8" stroke-width="1.6" fill="none"/></svg>
  <svg class="a" style="left:1726px;top:9px" width="20" height="20" viewBox="0 0 20 20"><path d="M3,5 L8,3 L8,17 L3,15 Z M17,5 L12,3 L12,17 L17,15 Z" fill="#8d7fe0"/><circle cx="10" cy="10" r="3.5" fill="#2a2470"/></svg>
  <svg class="a" style="left:1763px;top:9px" width="20" height="20" viewBox="0 0 20 20"><path d="M4,6 H7.5 A2.5,2.5 0 0 1 12.5,6 H15 V9 A2.3,2.3 0 0 1 15,13.6 V17 H4 V13.5 A2.3,2.3 0 0 0 4,9 Z" stroke="#f0f0f5" stroke-width="1.8" fill="none" stroke-linejoin="round"/></svg>
  <div class="a" style="left:1798px;top:11px;width:2px;height:18px;background:#3a4a70;border-radius:1px"></div>
  <svg class="a" style="left:1816px;top:9px" width="20" height="20" viewBox="0 0 20 20"><path d="M10,2.5 V12.5 M5.8,8.5 L10,12.8 L14.2,8.5 M3,13 V17 H17 V13" stroke="#f0f0f5" stroke-width="1.9" fill="none" stroke-linecap="round" stroke-linejoin="round"/></svg>
  <div class="a" style="left:1852px;top:9px;width:20px;height:20px;border-radius:50%;background:#13906a"></div>
  <span class="t" style="left:1857px;top:13px;font-size:12px;color:#fff">D</span>
  <svg class="a" style="left:1888px;top:9px" width="20" height="20" viewBox="0 0 20 20"><g fill="#f0f0f5"><circle cx="10" cy="4" r="1.7"/><circle cx="10" cy="10" r="1.7"/><circle cx="10" cy="16" r="1.7"/></g></svg>
  <!-- bookmarks bar -->
  <svg class="a" style="left:11px;top:47px" width="18" height="18" viewBox="0 0 18 18"><g stroke="#f0f0f5" stroke-width="1.6" fill="none"><rect x="2" y="2" width="5" height="5"/><rect x="11" y="2" width="5" height="5"/><rect x="2" y="11" width="5" height="5"/><rect x="11" y="11" width="5" height="5"/></g></svg>
  <div class="a" style="left:43px;top:48px;width:1px;height:18px;background:#3a3f60"></div>
  <svg class="a" style="left:60px;top:49px" width="17" height="15" viewBox="0 0 17 15"><path d="M1,2 H6 L7.5,3.8 H16 V13.5 H1 Z" stroke="#a9a9bd" stroke-width="1.3" fill="none" stroke-linejoin="round"/></svg><span class="t" style="left:84px;top:50px;font-size:12.3px;color:#ececf4;-webkit-text-stroke:0.15px #ececf4">Chrome Resources</span>
<svg class="a" style="left:209px;top:49px" width="17" height="15" viewBox="0 0 17 15"><path d="M1,2 H6 L7.5,3.8 H16 V13.5 H1 Z" stroke="#a9a9bd" stroke-width="1.3" fill="none" stroke-linejoin="round"/></svg><span class="t" style="left:233px;top:50px;font-size:12.3px;color:#ececf4;-webkit-text-stroke:0.15px #ececf4">Payment Gateways</span>
<svg class="a" style="left:359px;top:49px" width="17" height="15" viewBox="0 0 17 15"><path d="M1,2 H6 L7.5,3.8 H16 V13.5 H1 Z" stroke="#a9a9bd" stroke-width="1.3" fill="none" stroke-linejoin="round"/></svg><span class="t" style="left:383px;top:50px;font-size:12.3px;color:#ececf4;-webkit-text-stroke:0.15px #ececf4">Social Media</span>
<svg class="a" style="left:473px;top:49px" width="17" height="15" viewBox="0 0 17 15"><path d="M1,2 H6 L7.5,3.8 H16 V13.5 H1 Z" stroke="#a9a9bd" stroke-width="1.3" fill="none" stroke-linejoin="round"/></svg><span class="t" style="left:497px;top:50px;font-size:12.3px;color:#ececf4;-webkit-text-stroke:0.15px #ececf4">Web Development</span>
<svg class="a" style="left:620px;top:49px" width="17" height="15" viewBox="0 0 17 15"><path d="M1,2 H6 L7.5,3.8 H16 V13.5 H1 Z" stroke="#a9a9bd" stroke-width="1.3" fill="none" stroke-linejoin="round"/></svg><span class="t" style="left:644px;top:50px;font-size:12.3px;color:#ececf4;-webkit-text-stroke:0.15px #ececf4">Promotion</span>
<svg class="a" style="left:719px;top:49px" width="17" height="15" viewBox="0 0 17 15"><path d="M1,2 H6 L7.5,3.8 H16 V13.5 H1 Z" stroke="#a9a9bd" stroke-width="1.3" fill="none" stroke-linejoin="round"/></svg><span class="t" style="left:743px;top:50px;font-size:12.3px;color:#ececf4;-webkit-text-stroke:0.15px #ececf4">Schools</span>
<svg class="a" style="left:806px;top:49px" width="17" height="15" viewBox="0 0 17 15"><path d="M1,2 H6 L7.5,3.8 H16 V13.5 H1 Z" stroke="#a9a9bd" stroke-width="1.3" fill="none" stroke-linejoin="round"/></svg><span class="t" style="left:830px;top:50px;font-size:12.3px;color:#ececf4;-webkit-text-stroke:0.15px #ececf4">Life Accounts</span>
<svg class="a" style="left:925px;top:49px" width="17" height="15" viewBox="0 0 17 15"><path d="M1,2 H6 L7.5,3.8 H16 V13.5 H1 Z" stroke="#a9a9bd" stroke-width="1.3" fill="none" stroke-linejoin="round"/></svg><span class="t" style="left:949px;top:50px;font-size:12.3px;color:#ececf4;-webkit-text-stroke:0.15px #ececf4">Video Renderers</span>
<svg class="a" style="left:1061px;top:49px" width="17" height="15" viewBox="0 0 17 15"><path d="M1,2 H6 L7.5,3.8 H16 V13.5 H1 Z" stroke="#a9a9bd" stroke-width="1.3" fill="none" stroke-linejoin="round"/></svg><span class="t" style="left:1085px;top:50px;font-size:12.3px;color:#ececf4;-webkit-text-stroke:0.15px #ececf4">New Soft</span>
<svg class="a" style="left:1155px;top:49px" width="17" height="15" viewBox="0 0 17 15"><path d="M1,2 H6 L7.5,3.8 H16 V13.5 H1 Z" stroke="#a9a9bd" stroke-width="1.3" fill="none" stroke-linejoin="round"/></svg><span class="t" style="left:1179px;top:50px;font-size:12.3px;color:#ececf4;-webkit-text-stroke:0.15px #ececf4">Specials</span>
<div class="a" style="left:1246px;top:50px;width:12px;height:13px;background:#10122a"></div><span class="t" style="left:1265px;top:50px;font-size:12.3px;color:#ececf4;-webkit-text-stroke:0.15px #ececf4">Minvo | Clip videos...</span>
<svg class="a" style="left:1397px;top:48px" width="16" height="16" viewBox="0 0 16 16"><circle cx="8" cy="8" r="6.5" fill="#c8c8d4"/><path d="M4,4 C6,5 7,7 6,9 C5,11 8,12 9,14 M11,3 C10,5 12,7 14,7" stroke="#0c0a24" stroke-width="1.5" fill="none"/></svg><span class="t" style="left:1419px;top:50px;font-size:12.3px;color:#ececf4;-webkit-text-stroke:0.15px #ececf4">Main Members –...</span>
<svg class="a" style="left:1551px;top:48px" width="16" height="16" viewBox="0 0 16 16"><rect x="1.5" y="11" width="3" height="4" rx="1.2" fill="#e8710a"/><rect x="6.5" y="6" width="3" height="9" rx="1.2" fill="#f9ab00"/><rect x="11.5" y="1" width="3" height="14" rx="1.2" fill="#e8710a"/></svg><span class="t" style="left:1573px;top:50px;font-size:12.3px;color:#ececf4;-webkit-text-stroke:0.15px #ececf4">Analytics</span>
<svg class="a" style="left:1753px;top:49px" width="14" height="14" viewBox="0 0 14 14"><path d="M2.5,3 L6,7 L2.5,11 M7.5,3 L11,7 L7.5,11" stroke="#f0f0f5" stroke-width="1.6" fill="none" stroke-linecap="round"/></svg><div class="a" style="left:1783px;top:48px;width:1px;height:18px;background:#3a3f60"></div><svg class="a" style="left:1800px;top:49px" width="17" height="15" viewBox="0 0 17 15"><path d="M1,2 H6 L7.5,3.8 H16 V13.5 H1 Z" stroke="#a9a9bd" stroke-width="1.3" fill="none" stroke-linejoin="round"/></svg><span class="t" style="left:1825px;top:50px;font-size:12.3px;color:#ececf4;-webkit-text-stroke:0.15px #ececf4">All Bookmarks</span>

</div>
<div id="page" class="a">
  <div class="a" style="left:80px;top:56px;width:1760px;height:900px;border-radius:7px 7px 0 0;background:#f7fafa;box-shadow:0 0 28px rgba(40,50,70,0.06)"></div>
  <div class="a" style="left:80px;top:56px;width:1760px;height:59px;border-radius:7px 7px 0 0;background:#15213f"></div>
  <div class="a" style="left:111px;top:81px;width:42px;height:14px;border-radius:4px;background:linear-gradient(180deg,#e6e6ee 0%,#8a8aa0 40%,#3a3a80 70%,#5b4fc8 100%)"></div>
  <span class="t" style="left:114px;top:84px;font-size:6px;color:#fff;font-weight:bold;letter-spacing:0.2px">Click Engine</span>
  <div class="a" style="left:1756px;top:64px;width:44px;height:44px;border-radius:50%;background:#2b5dc6"></div>
  <svg class="a" style="left:1760px;top:68px" width="36" height="36" viewBox="0 0 36 36"><path d="M18,6 A12,12 0 1 1 11.3,8.05" stroke="#fff" stroke-width="6.5" fill="none" stroke-linecap="round"/><path d="M18,3 V16.5" stroke="#fff" stroke-width="5.8"/><circle cx="18" cy="16.5" r="2.9" fill="#fff"/><path d="M14.6,9 V17" stroke="#2b5dc6" stroke-width="1.2"/></svg>
  <div class="a" style="left:80px;top:115px;width:288px;height:820px;background:#ffffff"></div>
  <span class="t" style="left:112px;top:148px;font-size:12px;color:#3a6eaa;letter-spacing:1.05px;-webkit-text-stroke:0.3px #3a6eaa">MAIN NAVIGATION</span>
<svg class="a" style="left:113px;top:179px" width="20" height="20" viewBox="0 0 20 20"><rect x="2" y="2" width="16" height="16" rx="1" stroke="#3d7dbf" stroke-width="1.6" fill="none"/><path d="M2,6.5 H18 M2,9.5 H6 L8,12 H12 L14,9.5 H18" stroke="#3d7dbf" stroke-width="1.5" fill="none"/></svg>
<span class="t" style="left:150px;top:183px;font-size:16px;color:#60666f">Campaigns</span>
<svg class="a" style="left:113px;top:218px" width="20" height="20" viewBox="0 0 20 20"><path d="M10,2 L18,6.5 L10,11 L2,6.5 Z" stroke="#3d7dbf" stroke-width="1.6" fill="none" stroke-linejoin="round"/><path d="M2,10.5 L10,15 L18,10.5 M2,14.2 L10,18.7 L18,14.2" stroke="#3d7dbf" stroke-width="1.6" fill="none" stroke-linejoin="round"/></svg>
<span class="t" style="left:150px;top:222px;font-size:16px;color:#60666f">Create Campaign</span>
<svg class="a" style="left:113px;top:258px" width="20" height="20" viewBox="0 0 20 20"><path d="M5,4 H18 V15 H5 L1.5,9.5 Z" stroke="#3d7dbf" stroke-width="1.6" fill="none" stroke-linejoin="round"/><circle cx="7.5" cy="9.5" r="1.6" stroke="#3d7dbf" stroke-width="1.4" fill="none"/></svg>
<span class="t" style="left:150px;top:262px;font-size:16px;color:#60666f">Custom domains</span>
<svg class="a" style="left:113px;top:297px" width="20" height="20" viewBox="0 0 20 20"><path d="M10,18.5 C5.5,18.5 3,15.5 3,12 C3,8.5 5.5,6.5 6.5,4.5 C7,6.5 8,8 9,8.5 C9,5.5 10.5,3 12.5,1.5 C12.5,4.5 17,7.5 17,12 C17,15.5 14.5,18.5 10,18.5 Z" stroke="#3d7dbf" stroke-width="1.6" fill="none" stroke-linejoin="round"/></svg>
<span class="t" style="left:150px;top:301px;font-size:16px;color:#60666f">API</span>
<span class="t" style="left:112px;top:350px;font-size:12px;color:#3a6eaa;letter-spacing:1.05px;-webkit-text-stroke:0.3px #3a6eaa">ADMIN MENU</span>
<svg class="a" style="left:113px;top:381px" width="20" height="20" viewBox="0 0 20 20"><path d="M2.5,18 C2.5,12 6,9 12,9 M9,4.5 L13.5,9 L9,13.5 M12.5,4.5 L17,9 L12.5,13.5" stroke="#3d7dbf" stroke-width="1.6" fill="none" stroke-linecap="round" stroke-linejoin="round"/></svg>
<span class="t" style="left:150px;top:385px;font-size:16px;color:#60666f">Add new link</span>
<svg class="a" style="left:113px;top:420px" width="20" height="20" viewBox="0 0 20 20"><path d="M8.6,1.8 H11.4 L12,4.3 L14.2,3.1 L16.2,5.1 L15,7.3 L17.5,7.9 V10.7 L15,11.3 L16.2,13.5 L14.2,15.5 L12,14.3 L11.4,16.8 H8.6 L8,14.3 L5.8,15.5 L3.8,13.5 L5,11.3 L2.5,10.7 V7.9 L5,7.3 L3.8,5.1 L5.8,3.1 L8,4.3 Z" stroke="#3d7dbf" stroke-width="1.5" fill="none" stroke-linejoin="round"/><circle cx="10" cy="9.3" r="2.7" stroke="#3d7dbf" stroke-width="1.5" fill="none"/></svg>
<span class="t" style="left:150px;top:424px;font-size:16px;color:#60666f">Settings</span>
<svg class="a" style="left:113px;top:459px" width="20" height="20" viewBox="0 0 20 20"><path d="M8.6,1.8 H11.4 L12,4.3 L14.2,3.1 L16.2,5.1 L15,7.3 L17.5,7.9 V10.7 L15,11.3 L16.2,13.5 L14.2,15.5 L12,14.3 L11.4,16.8 H8.6 L8,14.3 L5.8,15.5 L3.8,13.5 L5,11.3 L2.5,10.7 V7.9 L5,7.3 L3.8,5.1 L5.8,3.1 L8,4.3 Z" stroke="#3d7dbf" stroke-width="1.5" fill="none" stroke-linejoin="round"/><circle cx="10" cy="9.3" r="2.7" stroke="#3d7dbf" stroke-width="1.5" fill="none"/></svg>
<span class="t" style="left:150px;top:463px;font-size:16px;color:#60666f">Users</span>
<svg class="a" style="left:113px;top:499px" width="20" height="20" viewBox="0 0 20 20"><path d="M8.6,1.8 H11.4 L12,4.3 L14.2,3.1 L16.2,5.1 L15,7.3 L17.5,7.9 V10.7 L15,11.3 L16.2,13.5 L14.2,15.5 L12,14.3 L11.4,16.8 H8.6 L8,14.3 L5.8,15.5 L3.8,13.5 L5,11.3 L2.5,10.7 V7.9 L5,7.3 L3.8,5.1 L5.8,3.1 L8,4.3 Z" stroke="#3d7dbf" stroke-width="1.5" fill="none" stroke-linejoin="round"/><circle cx="10" cy="9.3" r="2.7" stroke="#3d7dbf" stroke-width="1.5" fill="none"/></svg>
<span class="t" style="left:150px;top:503px;font-size:16px;color:#60666f">Membership</span>
<span class="t" style="left:113px;top:890px;font-size:10px;color:#777">v2.1</span>

  <span class="t" style="left:410px;top:179px;font-size:17.5px;font-weight:bold;color:#1a2330">Campaigns</span>
<div class="a" style="left:410px;top:215px;width:28px;height:3px;background:#1a7ae0"></div>
<div class="a" style="left:421px;top:252px;width:253px;height:41px;background:#fff;border:1px solid #e0e4e6"></div>
<span class="t" style="left:436px;top:265px;font-size:16px;color:#7a7a7a">Filter by title</span>
<div class="a" style="left:677px;top:252px;width:69px;height:41px;background:#35b135;border-radius:1px"></div>
<span class="t" style="left:692px;top:265px;font-size:16px;color:#fff;font-weight:bold">Filter</span>
<span class="t" style="left:429px;top:326px;font-size:14px;font-weight:bold;color:#454a50;letter-spacing:1.05px">TITLE</span>
<span class="t" style="left:716px;top:326px;font-size:14px;font-weight:bold;color:#454a50;letter-spacing:1.05px">SHORT URL</span>
<span class="t" style="left:1200px;top:326px;font-size:14px;font-weight:bold;color:#454a50;letter-spacing:1.05px">HITS</span>
<span class="t" style="left:1320px;top:326px;font-size:14px;font-weight:bold;color:#454a50;letter-spacing:1.05px">MANAGE</span>
<div class="a" style="left:408px;top:351px;width:1387px;height:141px;background:#fcfdfd"></div>
<div class="a" style="left:408px;top:351px;width:289px;height:68px;background:#fff"></div>
<div class="a" style="left:699px;top:351px;width:480px;height:68px;background:#fff"></div>
<div class="a" style="left:1181px;top:351px;width:118px;height:68px;background:#fff"></div>
<div class="a" style="left:1301px;top:351px;width:494px;height:68px;background:#fff"></div>
<div class="a" style="left:408px;top:423px;width:289px;height:69px;background:#fff"></div>
<div class="a" style="left:699px;top:423px;width:480px;height:69px;background:#fff"></div>
<div class="a" style="left:1181px;top:423px;width:118px;height:69px;background:#fff"></div>
<div class="a" style="left:1301px;top:423px;width:494px;height:69px;background:#fff"></div>
<div class="a" style="left:716px;top:375px;width:263px;height:24px;background:#b4d5fb"></div>
<span class="t" style="left:429px;top:379px;font-size:16px;color:#1f2328">Essential Elements</span>
<span class="t" style="left:716px;top:379px;font-size:16px;color:#1b74c9;letter-spacing:0.55px">https://reginareal.ca/click/essential</span>
<span class="t" style="left:1200px;top:379px;font-size:16px;color:#1f2328">21</span>
<div class="a" style="left:1329px;top:369px;width:48px;height:35px;border-radius:4px;background:#292b2c"></div>
<svg class="a" style="left:1343px;top:376px" width="20" height="20" viewBox="0 0 20 20"><path d="M11,3.5 H3.5 V17.5 H17.5 V10" stroke="#fff" stroke-width="1.7" fill="none" stroke-linejoin="round"/><path d="M15.2,2.3 L18.2,5.3 L10.5,13 L7,14 L8,10.5 Z" stroke="#fff" stroke-width="1.6" fill="none" stroke-linejoin="round"/></svg>
<div class="a" style="left:1407px;top:369px;width:48px;height:35px;border-radius:4px;background:#5bc0de"></div>
<svg class="a" style="left:1421px;top:376px" width="20" height="20" viewBox="0 0 20 20"><path d="M8.5,11.5 L12,8 M9.5,6 L11.5,4 A3.2,3.2 0 0 1 16,8.5 L14,10.5 M10.5,14 L8.5,16 A3.2,3.2 0 0 1 4,11.5 L6,9.5" stroke="#fff" stroke-width="1.8" fill="none" stroke-linecap="round"/></svg>
<div class="a" style="left:1485px;top:369px;width:48px;height:35px;border-radius:4px;background:#2f7fdc"></div>
<svg class="a" style="left:1499px;top:376px" width="20" height="20" viewBox="0 0 20 20"><path d="M3.5,7.5 V5.5 Q3.5,3.5 5.5,3.5 H7.5 M12.5,3.5 H14.5 Q16.5,3.5 16.5,5.5 V7.5 M16.5,12.5 V14.5 Q16.5,16.5 14.5,16.5 H12.5 M7.5,16.5 H5.5 Q3.5,16.5 3.5,14.5 V12.5" stroke="#fff" stroke-width="1.6" fill="none" stroke-linecap="round" stroke-linejoin="round"/></svg>
<div class="a" style="left:1563px;top:369px;width:48px;height:35px;border-radius:4px;background:#a232ee"></div>
<svg class="a" style="left:1577px;top:376px" width="20" height="20" viewBox="0 0 20 20"><circle cx="10" cy="10" r="1.3" stroke="#fff" stroke-width="1.3" fill="none"/><path d="M7.3,7 A4,4 0 0 0 7.3,13 M12.7,7 A4,4 0 0 1 12.7,13 M5.2,5 A6.6,6.6 0 0 0 5.2,15 M14.8,5 A6.6,6.6 0 0 1 14.8,15" stroke="#fff" stroke-width="1.4" fill="none" stroke-linecap="round"/></svg>
<div class="a" style="left:1642px;top:369px;width:48px;height:35px;border-radius:4px;background:#33b233"></div>
<svg class="a" style="left:1656px;top:376px" width="20" height="20" viewBox="0 0 20 20"><path d="M2.8,10 L7.5,5.8 L10.5,8.3 L16.5,2.8 M13.3,2.6 H16.8 V6" stroke="#fff" stroke-width="1.4" fill="none" stroke-linecap="round" stroke-linejoin="round"/><g stroke="#fff" stroke-width="1.1" fill="none"><rect x="2.8" y="13.3" width="2.4" height="4.2"/><rect x="6.8" y="11.3" width="2.4" height="6.2"/><rect x="10.8" y="12.3" width="2.4" height="5.2"/><rect x="14.8" y="9.8" width="2.4" height="7.7"/></g></svg>
<div class="a" style="left:1720px;top:369px;width:48px;height:35px;border-radius:4px;background:#e25050"></div>
<svg class="a" style="left:1734px;top:376px" width="20" height="20" viewBox="0 0 20 20"><circle cx="10" cy="10" r="7.6" stroke="#fff" stroke-width="1.6" fill="none"/><path d="M7,7 L13,13 M13,7 L7,13" stroke="#fff" stroke-width="1.6" stroke-linecap="round"/></svg>
<span class="t" style="left:429px;top:451px;font-size:16px;color:#1f2328">DNA Webinar</span>
<span class="t" style="left:716px;top:451px;font-size:16px;color:#1b74c9;letter-spacing:0.55px">https://reginareal.ca/click/dna</span>
<span class="t" style="left:1200px;top:451px;font-size:16px;color:#1f2328">8</span>
<div class="a" style="left:1329px;top:441px;width:48px;height:35px;border-radius:4px;background:#292b2c"></div>
<svg class="a" style="left:1343px;top:448px" width="20" height="20" viewBox="0 0 20 20"><path d="M11,3.5 H3.5 V17.5 H17.5 V10" stroke="#fff" stroke-width="1.7" fill="none" stroke-linejoin="round"/><path d="M15.2,2.3 L18.2,5.3 L10.5,13 L7,14 L8,10.5 Z" stroke="#fff" stroke-width="1.6" fill="none" stroke-linejoin="round"/></svg>
<div class="a" style="left:1407px;top:441px;width:48px;height:35px;border-radius:4px;background:#5bc0de"></div>
<svg class="a" style="left:1421px;top:448px" width="20" height="20" viewBox="0 0 20 20"><path d="M8.5,11.5 L12,8 M9.5,6 L11.5,4 A3.2,3.2 0 0 1 16,8.5 L14,10.5 M10.5,14 L8.5,16 A3.2,3.2 0 0 1 4,11.5 L6,9.5" stroke="#fff" stroke-width="1.8" fill="none" stroke-linecap="round"/></svg>
<div class="a" style="left:1485px;top:441px;width:48px;height:35px;border-radius:4px;background:#2f7fdc"></div>
<svg class="a" style="left:1499px;top:448px" width="20" height="20" viewBox="0 0 20 20"><path d="M3.5,7.5 V5.5 Q3.5,3.5 5.5,3.5 H7.5 M12.5,3.5 H14.5 Q16.5,3.5 16.5,5.5 V7.5 M16.5,12.5 V14.5 Q16.5,16.5 14.5,16.5 H12.5 M7.5,16.5 H5.5 Q3.5,16.5 3.5,14.5 V12.5" stroke="#fff" stroke-width="1.6" fill="none" stroke-linecap="round" stroke-linejoin="round"/></svg>
<div class="a" style="left:1563px;top:441px;width:48px;height:35px;border-radius:4px;background:#a232ee"></div>
<svg class="a" style="left:1577px;top:448px" width="20" height="20" viewBox="0 0 20 20"><circle cx="10" cy="10" r="1.3" stroke="#fff" stroke-width="1.3" fill="none"/><path d="M7.3,7 A4,4 0 0 0 7.3,13 M12.7,7 A4,4 0 0 1 12.7,13 M5.2,5 A6.6,6.6 0 0 0 5.2,15 M14.8,5 A6.6,6.6 0 0 1 14.8,15" stroke="#fff" stroke-width="1.4" fill="none" stroke-linecap="round"/></svg>
<div class="a" style="left:1642px;top:441px;width:48px;height:35px;border-radius:4px;background:#33b233"></div>
<svg class="a" style="left:1656px;top:448px" width="20" height="20" viewBox="0 0 20 20"><path d="M2.8,10 L7.5,5.8 L10.5,8.3 L16.5,2.8 M13.3,2.6 H16.8 V6" stroke="#fff" stroke-width="1.4" fill="none" stroke-linecap="round" stroke-linejoin="round"/><g stroke="#fff" stroke-width="1.1" fill="none"><rect x="2.8" y="13.3" width="2.4" height="4.2"/><rect x="6.8" y="11.3" width="2.4" height="6.2"/><rect x="10.8" y="12.3" width="2.4" height="5.2"/><rect x="14.8" y="9.8" width="2.4" height="7.7"/></g></svg>
<div class="a" style="left:1720px;top:441px;width:48px;height:35px;border-radius:4px;background:#e25050"></div>
<svg class="a" style="left:1734px;top:448px" width="20" height="20" viewBox="0 0 20 20"><circle cx="10" cy="10" r="7.6" stroke="#fff" stroke-width="1.6" fill="none"/><path d="M7,7 L13,13 M13,7 L7,13" stroke="#fff" stroke-width="1.6" stroke-linecap="round"/></svg>

  <!-- tooltip -->
  <div class="a" style="left:1544px;top:331px;width:85px;height:30px;border-radius:4px;background:#161616"></div>
  <div class="a" style="left:1580px;top:361px;width:0;height:0;border-left:6px solid transparent;border-right:6px solid transparent;border-top:6px solid #161616"></div>
  <span class="t" style="left:1552px;top:338px;font-size:14px;color:#fff">Share URL</span>
  <!-- cursor -->
  <svg class="a" style="left:1580px;top:384px" width="20" height="22" viewBox="0 0 20 22">
    <path d="M6,2.5 C6,1.2 8.2,1.2 8.2,2.5 V9 C8.2,8 10.4,8 10.4,9.3 C10.4,8.3 12.6,8.3 12.6,9.6 C12.6,8.7 14.8,8.7 14.8,10 V15 C14.8,17.5 13.5,19.5 11,19.5 H9 C7.5,19.5 6.5,18.5 5.5,17.2 L2.2,12.5 C1.4,11.3 2.8,10.2 3.8,11.2 L6,13.3 Z" fill="#fff" stroke="#000" stroke-width="1.1" stroke-linejoin="round"/>
    <path d="M8.5,13.5 V17 M10.5,13.5 V17 M12.5,13.5 V17" stroke="#000" stroke-width="0.9"/>
  </svg>

</div>
<div class="a" style="left:0;top:1060px;width:265px;height:20px;background:#1d5289;border-radius:0 5px 0 0"></div>
<span class="t" style="left:5px;top:1064px;font-size:12.8px;color:#fff">https://reginareal.ca/click/admin/campaigns#</span>
</body></html>
